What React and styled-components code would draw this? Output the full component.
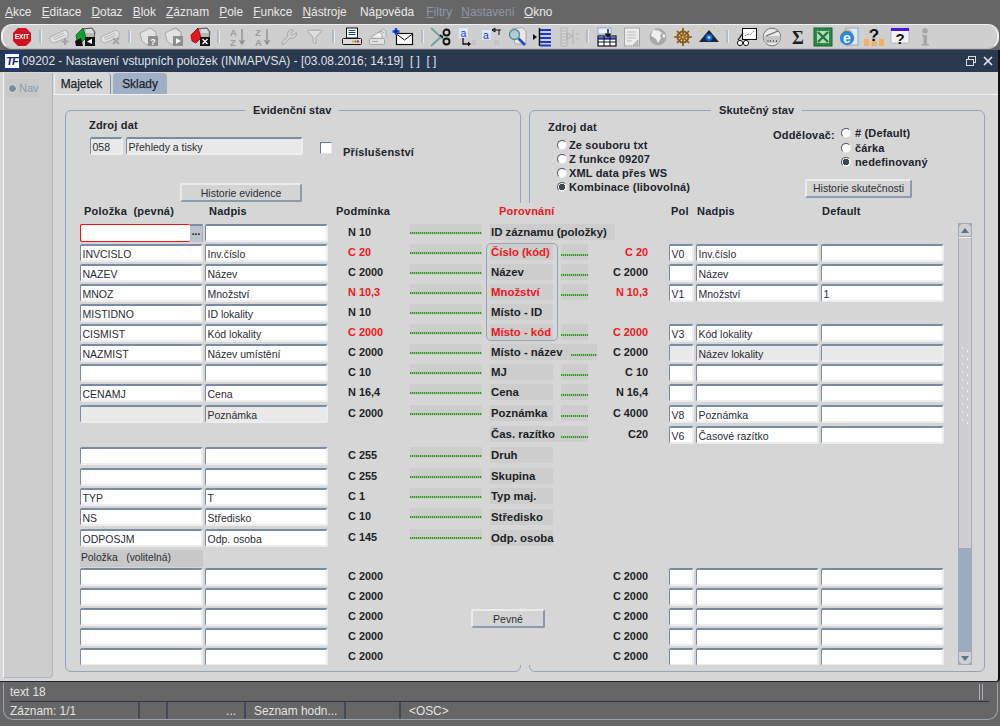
import React from "react";
import styled, { createGlobalStyle } from "styled-components";
import { Wrench, Filter } from "lucide-react";

const FONT = `"Liberation Sans", Arial, sans-serif`;
const GROUND = "#d6d6d6";
const SHADE = "#cdcdcd";
const EDGE = "#93a5bb";
const RED = "#f2161a";

const Global = createGlobalStyle`
  html, body { margin: 0; padding: 0; background: #666666; }
  body { font-family: ${FONT}; }
`;

const Page = styled.div`
  width: 1000px;
  height: 726px;
  display: flex;
  flex-direction: column;
  background: #666666;
  overflow: hidden;
`;

const MenuBar = styled.div`
  height: 24px;
  flex: none;
  display: flex;
  align-items: center;
  gap: 10.2px;
  padding-left: 5px;
  font-size: 11.9px;
`;
const MenuItem = styled.span`
  color: ${(p) => (p.$off ? "#8a97a8" : "#e9e9e9")};
  margin-left: ${(p) => p.$shift || 0}px;
  u { text-underline-offset: 1px; }
`;

const ToolBar = styled.div`
  height: 25px;
  flex: none;
  box-sizing: border-box;
  margin: 0 1px 1px;
  padding-left: 6px;
  display: flex;
  align-items: center;
  background: #cfcfcf;
  border: 1px solid #b9bcc2;
  border-top-color: #f0f0f0;
  border-left: 2px solid #efefef;
  border-right: 2px solid #efefef;
  border-radius: 11px;
`;
const Tool = styled.span`
  width: 25.5px;
  flex: none;
  display: flex;
  justify-content: center;
  align-items: center;
`;
const ToolSep = styled.span`
  width: 12.5px;
  height: 13px;
  flex: none;
  display: flex;
  justify-content: center;
  &::before {
    content: "";
    width: 2px;
    background: #aebccd;
    border-right: 1px solid #ececec;
  }
`;

const Window = styled.div`
  flex: none;
  height: 632px;
  display: flex;
  flex-direction: column;
  background: ${GROUND};
  border-right: 2px solid #111;
  border-bottom: 1px solid #23262e;
  border-bottom-right-radius: 4px;
  box-sizing: border-box;
  width: 1000px;
`;
const TitleBar = styled.div`
  height: 22px;
  flex: none;
  display: flex;
  align-items: center;
  gap: 2px;
  padding: 0 4px;
  background: #2a3850;
  color: #dfe3e8;
  font-size: 11.9px;
`;
const TitleLogo = styled.span`
  width: 16px;
  height: 16px;
  flex: none;
  box-sizing: border-box;
  display: flex;
  align-items: center;
  justify-content: center;
  background: #fff;
  border: 1px solid #1430d8;
  color: #10208a;
  font: italic bold 11px ${FONT};
  letter-spacing: -1px;
`;
const TitleText = styled.span`
  flex: 1;
  white-space: pre;
`;
const TitleActions = styled.span`
  display: flex;
  align-items: center;
  gap: 5px;
`;

const WindowBody = styled.div`
  flex: 1;
  min-height: 0;
  display: flex;
`;
const Side = styled.aside`
  width: 50px;
  flex: none;
  box-sizing: border-box;
  margin: 1px 0 3px 3px;
  padding: 6px 0 0 2px;
  background: ${SHADE};
  border-left: 1px solid #f4f4f4;
  border-right: 1px solid #aab6c6;
  border-bottom: 1px solid #aab6c6;
  border-bottom-right-radius: 4px;
`;
const NavButton = styled.div`
  width: 33px;
  height: 18px;
  display: flex;
  align-items: center;
  gap: 2px;
  padding-left: 2px;
  box-sizing: border-box;
  background: #c8c8c8;
  color: #8a9bb0;
  font-size: 11px;
`;
const NavDot = styled.span`
  width: 9px;
  height: 9px;
  flex: none;
  box-sizing: border-box;
  border-radius: 50%;
  background: #7f8a96;
  border: 1.5px solid #e2e2e2;
`;

const Main = styled.main`
  flex: 1;
  min-width: 0;
  display: flex;
  flex-direction: column;
`;
const TabStrip = styled.div`
  height: 23px;
  flex: none;
  box-sizing: border-box;
  padding: 1px 0 0 1px;
  display: flex;
  gap: 2px;
  border-bottom: 1px solid #f1f1f1;
`;
const Tab = styled.div`
  display: flex;
  align-items: center;
  justify-content: center;
  box-sizing: border-box;
  width: ${(p) => p.$w}px;
  color: #20242c;
  font-size: 11.9px;
  -webkit-text-stroke: 0.25px #20242c;
  border-top-left-radius: 4px;
  border-top-right-radius: 4px;
  background: ${(p) => (p.$on ? GROUND : "#9fb0c6")};
  border-left: 1px solid ${(p) => (p.$on ? "#f1f1f1" : "#9fb0c6")};
  border-right: 1px solid ${(p) => (p.$on ? "#7f90a8" : "#9fb0c6")};
  padding-right: ${(p) => (p.$on ? 2 : 0)}px;
`;

const Stack = styled.div`
  flex: 1;
  min-height: 0;
  display: grid;
  padding: 15px 0 0 12px;
  > * { grid-area: 1 / 1; }
`;
const Frames = styled.div`
  display: flex;
  gap: 8px;
  height: 562px;
`;
const Frame = styled.section`
  position: relative;
  box-sizing: border-box;
  width: 456px;
  height: 562px;
  flex: none;
  border: 1px solid ${EDGE};
  border-radius: 6px;
  &::after {
    content: "";
    position: absolute;
    top: 92px;
    bottom: 6px;
    width: 3px;
    background: ${GROUND};
    ${(p) => (p.$open === "right" ? "right: -2px;" : "left: -2px;")}
  }
`;
const Legend = styled.span`
  position: absolute;
  top: -8px;
  left: ${(p) => p.$x}px;
  padding: 0 8px;
  background: ${GROUND};
  color: #20242c;
  font-size: 11px;
  font-weight: 700;
  letter-spacing: 0.1px;
  line-height: 14px;
  white-space: nowrap;
`;

const LeftTop = styled.div`
  padding: 7px 0 0 23px;
`;
const Caption = styled.div`
  color: #20242c;
  font-size: 11px;
  font-weight: 700;
  letter-spacing: 0.2px;
  line-height: 14px;
  white-space: nowrap;
`;
const SourceLine = styled.div`
  display: flex;
  align-items: flex-start;
  gap: 3px;
  margin: 5px 0 0 1px;
`;
const Field = styled.div`
  box-sizing: border-box;
  height: 18px;
  width: ${(p) => (p.$w ? `${p.$w}px` : "100%")};
  flex: none;
  ${(p) => (p.$at ? `grid-column: ${p.$at}; grid-row: 1;` : "")}
  padding-left: 1.5px;
  overflow: hidden;
  white-space: nowrap;
  background: ${(p) => (p.$off ? "#e9e9e9" : "#fff")};
  border-style: solid;
  border-width: 2px 2px 2px 1.5px;
  border-color: #7a8ba5 #ededed #ededed #7a8ba5;
  border-radius: 2px;
  color: #2a2d33;
  font-size: 10.5px;
  line-height: 16px;
  ${(p) => (p.$hot ? `border: 1px solid ${RED}; border-right: none;` : "")}
`;
const CheckBox = styled.span`
  width: 12px;
  height: 12px;
  flex: none;
  box-sizing: border-box;
  margin: 5px 0 0 14px;
  background: #fff;
  border: 1px solid;
  border-color: #67788f #e8e8e8 #e8e8e8 #67788f;
`;
const CheckLabel = styled(Caption)`
  margin: 8px 0 0 8px;
`;
const Push = styled.div`
  box-sizing: border-box;
  width: ${(p) => p.$w}px;
  height: 19px;
  display: flex;
  align-items: center;
  justify-content: center;
  background: #d4d4d4;
  border: 2px solid;
  border-color: #ebebeb #8a9ab0 #8a9ab0 #ebebeb;
  border-radius: 2px;
  color: #2a2d33;
  font-size: 10.5px;
  white-space: nowrap;
`;
const EvidenceButton = styled(Push)`
  margin: 24px 0 0 91px;
`;

const RightTop = styled.div`
  display: flex;
`;
const SourceColumn = styled.div`
  width: 225px;
  flex: none;
  padding: 9px 0 0 18px;
`;
const RadioStack = styled.div`
  display: flex;
  flex-direction: column;
  margin: ${(p) => p.$m};
`;
const RadioRow = styled.div`
  height: ${(p) => p.$h}px;
  display: flex;
  align-items: center;
  gap: ${(p) => p.$gap}px;
  color: #20242c;
  font-size: 11px;
  font-weight: 700;
  letter-spacing: 0.15px;
  white-space: nowrap;
`;
const RadioDot = styled.span`
  width: 10px;
  height: 10px;
  flex: none;
  box-sizing: border-box;
  border-radius: 50%;
  border: 1px solid;
  border-color: #4e5866 #e8e8e8 #e8e8e8 #4e5866;
  background: ${(p) => (p.$on ? "radial-gradient(circle, #3c4552 0 3px, #f5f5f5 3.5px)" : "#fff")};
`;
const SeparatorColumn = styled.div`
  flex: 1;
  padding: 15px 0 0 0;
`;
const SeparatorLine = styled.div`
  display: flex;
  align-items: flex-start;
`;
const SeparatorLabel = styled(Caption)`
  width: 68px;
  padding-top: 2px;
`;
const ActualButton = styled(Push)`
  margin: 9px 0 0 32px;
`;

const Form = styled.div`
  position: relative;
  height: 555px;
  padding: 94px 0 0 15px;
  box-sizing: border-box;
  display: flex;
  overflow: hidden;
`;
const Rows = styled.div`
  width: 864px;
  flex: none;
`;
const Row = styled.div`
  height: ${(p) => p.$h}px;
  display: grid;
  align-items: start;
  grid-template-columns:
    [a] 123px 2px [b] 123px [c] 82px [d] 72px 8px [l] 63px 8px [e] 27px [f] 60px 21px
    [p] 25px 2px [n] 123px 2px [x] 123px [end];
  overflow: hidden;
`;
const Head = styled.div`
  grid-column: ${(p) => p.$at};
  grid-row: 1;
  white-space: nowrap;
  padding-left: ${(p) => p.$pad}px;
  color: ${(p) => (p.$red ? RED : "#20242c")};
  font-size: 11px;
  font-weight: 700;
  letter-spacing: 0.2px;
  line-height: 14px;
`;
const LookupSlot = styled.div`
  grid-column: a;
  grid-row: 1;
  display: flex;
`;
const LookupButton = styled.span`
  width: 13px;
  height: 18px;
  flex: none;
  box-sizing: border-box;
  background: #bdc3cc;
  border-top: 2px solid #7a8ba5;
  border-right: 1px solid #aab;
  color: #111;
  font-size: 10px;
  font-weight: 700;
  line-height: 11px;
  text-align: center;
`;
const Cond = styled.div`
  grid-column: ${(p) => (p.$right ? "f" : "c")};
  grid-row: 1;
  box-sizing: border-box;
  padding-left: ${(p) => (p.$right ? 0 : 20)}px;
  text-align: ${(p) => (p.$right ? "right" : "left")};
  color: ${(p) => (p.$red ? RED : "#1c1f25")};
  font-size: 10.9px;
  font-weight: 700;
  line-height: 17px;
  white-space: nowrap;
`;
const DOTS = `repeating-linear-gradient(90deg, #2f9a22 0 1px, #9ac08f 1px 2px)`;
const LongDots = styled.div`
  grid-column: d;
  grid-row: 1;
  height: 11px;
  background: ${DOTS} 0 8px / 100% 2px no-repeat, ${SHADE};
`;
const ShortDots = styled.div`
  grid-column: e;
  grid-row: 1;
  height: 16px;
  background: ${DOTS} 0 10px / 100% 2px no-repeat, ${SHADE};
`;
const Tag = styled.div`
  grid-column: l;
  grid-row: 1;
  box-sizing: border-box;
  width: ${(p) => p.$w || 63}px;
  height: 16px;
  margin-top: ${(p) => p.$dy || 0}px;
  padding-left: 1px;
  display: flex;
  background: ${SHADE};
  color: ${(p) => (p.$red ? RED : "#1c1f25")};
  font-size: 11.4px;
  font-weight: 700;
  line-height: 17px;
  white-space: nowrap;
  z-index: 1;
`;
const InlineDots = styled.span`
  flex: 1;
  height: 16px;
  margin-left: 8px;
  background: ${DOTS} 0 10px / 100% 2px no-repeat;
`;
const OptionalHead = styled.div`
  grid-column: a;
  grid-row: 1;
  height: 17px;
  background: #c8c8c8;
  color: #2a2d33;
  font-size: 10.3px;
  line-height: 15px;
  padding-left: 1px;
  white-space: pre;
`;
const FixedButton = styled(Push)`
  grid-column: d / e;
  grid-row: 1;
  margin-left: 61px;
  margin-top: 1px;
`;
const Group = styled.div`
  position: absolute;
  left: 421px;
  top: 133px;
  width: 72px;
  height: 98px;
  box-sizing: border-box;
  border: 1px solid #8fa3bc;
  border-radius: 5px;
  pointer-events: none;
`;
const Scroll = styled.div`
  width: 14px;
  height: 442px;
  flex: none;
  margin: 19px 0 0 14px;
  display: flex;
  flex-direction: column;
  box-sizing: border-box;
  background: #9cabc0;
`;
const ScrollEnd = styled.div`
  height: 14px;
  flex: none;
  box-sizing: border-box;
  display: flex;
  align-items: center;
  justify-content: center;
  background: #d0d0d0;
  border: 1px solid #9cabc0;
  border-radius: ${(p) => (p.$up ? "5px 5px 0 0" : "0 0 5px 5px")};
  &::before {
    content: "";
    border-left: 4px solid transparent;
    border-right: 4px solid transparent;
    ${(p) => (p.$up ? "border-bottom: 5px solid #5f7290;" : "border-top: 5px solid #5f7290;")}
  }
`;
const Thumb = styled.div`
  height: 311px;
  flex: none;
  box-sizing: border-box;
  position: relative;
  background: #cfcfcf;
  border-left: 1px solid #9cabc0;
  border-right: 1px solid #9cabc0;
  border-top: 1px solid #f0f0f0;
  &::after {
    content: "";
    position: absolute;
    left: 1px;
    right: 1px;
    top: 106px;
    height: 82px;
    background:
      radial-gradient(circle, #f2f2f2 0 0.8px, transparent 1px) 0 0 / 5px 8px,
      radial-gradient(circle, #f2f2f2 0 0.8px, transparent 1px) 5px 3px / 5px 8px;
    background-repeat: repeat-y;
  }
`;
const ScrollFill = styled.div`
  flex: 1;
`;

const Status = styled.footer`
  flex: 1;
  min-height: 0;
  box-sizing: border-box;
  margin: 1px 2px 6px 3px;
  padding-left: 6px;
  padding-right: 8px;
  display: flex;
  flex-direction: column;
  border: 1px solid #9aa3ae;
  border-top: none;
  border-radius: 0 0 10px 10px;
  color: #e4e4e4;
  font-size: 11.9px;
`;
const HintRow = styled.div`
  height: 19px;
  flex: none;
  box-sizing: border-box;
  display: flex;
  align-items: center;
  justify-content: space-between;
  border-bottom: 1px solid #2e333d;
  padding-right: 6px;
  &::after {
    content: "";
    width: 2px;
    height: 16px;
    border-left: 1px solid #a9b2bd;
    border-right: 1px solid #a9b2bd;
  }
`;
const InfoRow = styled.div`
  flex: 1;
  display: flex;
  align-items: stretch;
  white-space: nowrap;
`;
const InfoCell = styled.div`
  width: ${(p) => p.$w}px;
  flex: none;
  box-sizing: border-box;
  padding: 0 ${(p) => p.$r || 0}px 0 ${(p) => p.$l || 0}px;
  display: flex;
  align-items: center;
  justify-content: ${(p) => (p.$end ? "flex-end" : "flex-start")};
  border-right: ${(p) => (p.$last ? "none" : "2px solid #434a57")};
`;

/* ---------- toolbar drawings ---------- */
const Svg = ({ children, w = 22, h = 20 }) => (
  <svg width={w} height={h} viewBox="0 0 22 20" fill="none">{children}</svg>
);
const G1 = "#a3a3a3";
const G2 = "#e2e2e2";

const ghostCard = (
  <>
    <polygon points="1,10 16,3 19,5 19,10 5,16 1,14" fill={G2} stroke={G1} strokeWidth="0.8" />
    <path d="M4 11l11-5M5 13l11-5" stroke={G1} strokeWidth="0.7" />
  </>
);
const colourCard = (fill, dark) => (
  <>
    <polygon points="8,2 18,1 21,5 20,11 9,12" fill="#b9b9b9" stroke="#333" strokeWidth="0.8" />
    <path d="M12 3h6M12 5h7" stroke="#fff" strokeWidth="0.9" />
    <polygon points="2,8 9,1 12,11 7,16 3,14" fill={fill} stroke={dark} strokeWidth="0.8" />
  </>
);
const docGhost = (
  <polygon points="2,6 12,1 18,5 18,12 9,18 4,14" fill={G2} stroke={G1} strokeWidth="0.9" />
);

const drawings = {
  exit: (
    <svg width="20" height="20" viewBox="0 0 20 20">
      <polygon points="6,1 14,1 19,6 19,14 14,19 6,19 1,14 1,6" fill="#d5101e" />
      <text x="10" y="12.4" textAnchor="middle" fontFamily={FONT} fontWeight="700" fontSize="6.6" fill="#fff">EXIT</text>
    </svg>
  ),
  addRow: (
    <Svg>
      {ghostCard}
      <path d="M16 11v7M12.5 14.5h7" stroke={G1} strokeWidth="2" />
    </Svg>
  ),
  green: (
    <Svg>
      {colourCard("#14a02c", "#0a5a18")}
      <polygon points="1,14 7,11 9,19 2,19" fill="#111" />
      <rect x="11" y="10" width="10" height="9" fill="#111" />
      <polygon points="13,14.5 18,11.8 18,17" fill="#fff" />
    </Svg>
  ),
  delRow: (
    <Svg>
      {ghostCard}
      <path d="M13 11l6 6M19 11l-6 6" stroke={G1} strokeWidth="1.8" />
    </Svg>
  ),
  askDoc: (
    <Svg>
      {docGhost}
      <rect x="10" y="9" width="10" height="10" fill="#8e8e8e" />
      <text x="15" y="17.6" textAnchor="middle" fontFamily={FONT} fontWeight="700" fontSize="9" fill="#fff">?</text>
    </Svg>
  ),
  playDoc: (
    <Svg>
      {docGhost}
      <path d="M8 3l5-2 4 3" stroke={G1} />
      <rect x="10" y="9" width="10" height="10" fill="#8e8e8e" />
      <polygon points="13,11 18,14 13,17" fill="#fff" />
    </Svg>
  ),
  red: (
    <Svg>
      {colourCard("#e3161c", "#7e0a0e")}
      <rect x="11" y="10" width="10" height="9" fill="#111" />
      <path d="M13.5 12l5 5M18.5 12l-5 5" stroke="#fff" strokeWidth="1.4" />
    </Svg>
  ),
  az: (
    <Svg>
      <text x="3" y="9" fontFamily={FONT} fontWeight="700" fontSize="9.5" fill="#9c9c9c">A</text>
      <text x="3" y="18.5" fontFamily={FONT} fontWeight="700" fontSize="9.5" fill="#9c9c9c">Z</text>
      <path d="M15 2v14M12.5 13l2.5 4 2.5-4" stroke="#8d8d8d" strokeWidth="1.3" />
    </Svg>
  ),
  za: (
    <Svg>
      <text x="3" y="9" fontFamily={FONT} fontWeight="700" fontSize="9.5" fill="#9c9c9c">Z</text>
      <text x="3" y="18.5" fontFamily={FONT} fontWeight="700" fontSize="9.5" fill="#9c9c9c">A</text>
      <path d="M15 2v14M12.5 13l2.5 4 2.5-4" stroke="#8d8d8d" strokeWidth="1.3" />
    </Svg>
  ),
  wrench: <Wrench size={18} color="#a6a6a6" strokeWidth={1.3} />,
  filter: <Filter size={17} color="#a6a6a6" fill="#dedede" strokeWidth={1.4} />,
  printer: (
    <Svg>
      <rect x="5.5" y="1" width="11" height="10" fill="#fff" stroke="#111" />
      <path d="M7.5 3.5h7M7.5 5.5h7M7.5 7.5h7" stroke="#1d3ea8" />
      <rect x="1.5" y="11.5" width="19" height="6" rx="1" fill="#dcdcdc" stroke="#111" />
      <rect x="11" y="13.5" width="2" height="2" fill="#d8b020" />
      <rect x="13.5" y="13.5" width="2" height="2" fill="#28a040" />
      <rect x="16" y="13.5" width="2" height="2" fill="#d82020" />
    </Svg>
  ),
  printers: (
    <Svg>
      <path d="M8 8l8-6 3 2v6M6 9l8-5 3 2" stroke={G1} fill={G2} strokeWidth="0.9" />
      <path d="M4 10l8-5 3 2v4" stroke={G1} fill="#f0f0f0" strokeWidth="0.9" />
      <rect x="2.5" y="11.5" width="15" height="6" rx="1" fill={G2} stroke={G1} />
      <path d="M5 14.5h6" stroke={G1} />
    </Svg>
  ),
  mail: (
    <Svg>
      <rect x="4.5" y="6.5" width="16" height="11" fill="#fff" stroke="#111" strokeWidth="1.2" />
      <path d="M4.5 7l8 6 8-6" stroke="#111" />
      <path d="M4 1v7M.5 4.5h7" stroke="#0a5cf0" strokeWidth="2.4" />
      <circle cx="4" cy="4.5" r="2" fill="#0a2fa8" />
    </Svg>
  ),
  scissors: (
    <Svg>
      <path d="M1 1l12 11M1 19l12-11" stroke="#6fa0a2" strokeWidth="1.8" />
      <path d="M10 8l3 2.5" stroke="#111" strokeWidth="1.6" />
      <circle cx="16.5" cy="5.5" r="3" stroke="#111" strokeWidth="1.8" />
      <circle cx="16.5" cy="14.5" r="3" stroke="#111" strokeWidth="1.8" />
    </Svg>
  ),
  aDown: (
    <Svg>
      <rect x="3" y="1" width="9" height="10" fill="#dfe6ff" />
      <text x="4.5" y="9.5" fontFamily={FONT} fontSize="10.5" fill="#1a3cd8">a</text>
      <path d="M7 11v6h6" stroke="#111" strokeWidth="1.3" />
      <path d="M12 14.5l3 2.5-3 2.5z" fill="#111" />
      <text x="15" y="18" fontFamily={FONT} fontSize="9.5" fill="#bcbcbc">a</text>
    </Svg>
  ),
  aLeft: (
    <Svg>
      <rect x="1" y="3" width="9" height="10" fill="#dfe6ff" />
      <text x="2" y="12" fontFamily={FONT} fontSize="10.5" fill="#1a3cd8">a</text>
      <path d="M11 3h9M11 3l3-2v4z" stroke="#111" />
      <path d="M18 3v5" stroke="#111" />
      <text x="13" y="18" fontFamily={FONT} fontSize="9.5" fill="#bcbcbc">a</text>
    </Svg>
  ),
  magnify: (
    <Svg>
      <polygon points="5,2 15,0.5 19,4 19,17 8,17" fill="#e8e8e8" stroke="#a8a8a8" />
      <circle cx="7.5" cy="7.5" r="5" fill="#a8cfd8" stroke="#5e8a96" strokeWidth="1.3" />
      <path d="M11.5 11.5l6.5 6.5" stroke="#1f4fc0" strokeWidth="2.6" />
    </Svg>
  ),
  lines: (
    <Svg>
      <polygon points="1,7 5,10 1,13" fill="#111" />
      <path d="M7.5 1v18" stroke="#111" strokeWidth="1.5" />
      <path d="M8 3h11M8 7h11M8 11h11M8 15h11M8 18.5h11" stroke="#1c37d8" strokeWidth="1.9" />
    </Svg>
  ),
  linesOff: (
    <Svg>
      <path d="M3 1h6v18H3zM3 4h6M3 7h6M3 10h6M3 13h6M3 16h6" stroke="#b4b4b4" fill="#d6d6d6" />
      <path d="M9 6l5 3-5 3zM15 3v14M18 7h3M18 12h3" stroke="#b4b4b4" strokeWidth="1.2" />
    </Svg>
  ),
  table: (
    <Svg>
      <rect x="2" y="1" width="13" height="6" fill="#eef2ff" stroke="#7f9ad8" strokeWidth="0.8" />
      <rect x="2" y="9" width="18" height="10" fill="#fff" stroke="#111" strokeWidth="1.2" />
      <path d="M2 11.5h18" stroke="#1a34a0" strokeWidth="2.4" />
      <path d="M8 9v10M14 9v10M2 15h18" stroke="#111" />
      <path d="M12 2v7M9.5 6.5l2.5 3 2.5-3" stroke="#111" strokeWidth="1.4" />
    </Svg>
  ),
  page: (
    <Svg>
      <rect x="3.5" y="1" width="15" height="18" fill="#ececec" stroke="#a5a5a5" />
      <path d="M6 5h9M6 8h9M6 11h9M6 14h5" stroke="#bdbdbd" />
      <path d="M12 18l5-5v5z" fill="#c4c4c4" stroke="#9b9b9b" strokeWidth="0.6" />
    </Svg>
  ),
  globe: (
    <Svg>
      <circle cx="11" cy="10" r="8.5" fill="#a9a9a9" />
      <path d="M6 3l6 .5 3 2.5-2 3 1 2-3 5-2-4-3-2-2-1.5z" fill="#efefef" />
      <path d="M16 7l2.5 1-1 3-2-1z" fill="#efefef" />
    </Svg>
  ),
  wheel: (
    <Svg>
      <circle cx="11" cy="10" r="5.5" stroke="#8a5a14" strokeWidth="2" />
      <path d="M11 1v18M2 10h18M5 4l12 12M17 4L5 16" stroke="#8a5a14" strokeWidth="1.7" />
      <circle cx="11" cy="10" r="1.6" fill="#d6a040" />
    </Svg>
  ),
  pyramid: (
    <Svg>
      <path d="M3 5L1 3M6 2.5L5 1M16 2.5L17 1M19 5l2-2" stroke="#d8c820" strokeWidth="1" />
      <polygon points="11,3 21,15 1,15" fill="#1c2530" />
      <circle cx="11" cy="10.5" r="3.5" fill="#1060f0" />
      <circle cx="11" cy="10.5" r="1.4" fill="#9fe0ff" />
    </Svg>
  ),
  cart: (
    <Svg>
      <rect x="6.5" y="1.5" width="14" height="11" fill="#fff" stroke="#111" />
      <path d="M9 9l3-2 2 1 4-4" stroke="#555" strokeDasharray="1 1" />
      <path d="M2 13l5-7" stroke="#111" strokeWidth="1.2" />
      <circle cx="4" cy="16" r="2.6" fill="#fff" stroke="#111" />
      <circle cx="10" cy="16" r="2.6" fill="#fff" stroke="#111" />
    </Svg>
  ),
  gauge: (
    <Svg>
      <circle cx="11" cy="10" r="8.8" fill="#e9e9e9" stroke="#777" />
      <path d="M2.5 9h17v2.6l-1.7 4.4H4.2l-1.7-4.4z" fill="#c4c4c4" />
      <path d="M5 9l12-5" stroke="#666" strokeWidth="1.2" />
      <path d="M6.5 14h1M9 14h1M12 14h1M15 14h1" stroke="#444" strokeWidth="1.6" />
    </Svg>
  ),
  sigma: (
    <Svg>
      <text x="11" y="16.5" textAnchor="middle" fontFamily={`"Liberation Serif", serif`} fontWeight="700" fontSize="18" fill="#1c1f25">Σ</text>
    </Svg>
  ),
  excel: (
    <Svg>
      <rect x="2" y="1" width="18" height="18" fill="#2a8a48" stroke="#1c5c30" />
      <rect x="5" y="4" width="12" height="12" fill="#b8dabc" />
      <path d="M6 5l10 10M16 5L6 15" stroke="#1f7a3a" strokeWidth="2.4" />
    </Svg>
  ),
  ie: (
    <Svg>
      <rect x="8" y="1" width="12" height="17" fill="#dfe8f4" stroke="#8fa6c4" />
      <circle cx="9" cy="11" r="7.2" fill="#2f86d8" />
      <text x="9" y="16" textAnchor="middle" fontFamily={FONT} fontWeight="700" fontSize="14" fill="#e8f4ff">e</text>
      <path d="M3 7c3-5 9-5 11-2" stroke="#e8a030" strokeWidth="1" />
    </Svg>
  ),
  helpBars: (
    <Svg>
      <text x="11" y="14" textAnchor="middle" fontFamily={FONT} fontWeight="700" fontSize="17" fill="#111">?</text>
      <rect x="1" y="12" width="5" height="7" fill="#f0b060" />
      <rect x="8.5" y="14" width="5" height="5" fill="#f0b060" />
      <rect x="16" y="12" width="5" height="7" fill="#f0b060" />
    </Svg>
  ),
  helpBox: (
    <Svg>
      <rect x="2" y="2" width="18" height="14" fill="#f2f2f2" stroke="#aaa" strokeWidth="0.7" />
      <rect x="2" y="1" width="18" height="3" fill="#4818d8" />
      <text x="11" y="17" textAnchor="middle" fontFamily={FONT} fontWeight="700" fontSize="15" fill="#111">?</text>
    </Svg>
  ),
  info: (
    <Svg>
      <circle cx="11" cy="4" r="2.8" fill="#a6a6a6" />
      <path d="M8 8h5v9h2v1.6H7.5V17h2v-7.4H8z" fill="#a6a6a6" />
    </Svg>
  ),
};

const toolset = [
  "exit", "|", "addRow", "green", "delRow", "|", "askDoc", "playDoc", "red", "|",
  "az", "za", "wrench", "filter", "|", "printer", "printers", "mail", "|",
  "scissors", "aDown", "aLeft", "magnify", "lines", "linesOff", "|",
  "table", "page", "globe", "wheel", "pyramid", "|",
  "cart", "gauge", "sigma", "excel", "ie", "helpBars", "helpBox", "info",
];

const menus = [
  { pre: "", key: "A", rest: "kce" },
  { pre: "", key: "E", rest: "ditace" },
  { pre: "", key: "D", rest: "otaz" },
  { pre: "", key: "B", rest: "lok" },
  { pre: "", key: "Z", rest: "áznam" },
  { pre: "", key: "P", rest: "ole" },
  { pre: "", key: "F", rest: "unkce" },
  { pre: "", key: "N", rest: "ástroje" },
  { pre: "Ná", key: "p", rest: "ověda", shift: 3 },
  { pre: "", key: "F", rest: "iltry", off: true, shift: 2 },
  { pre: "", key: "N", rest: "astavení", off: true, shift: -1 },
  { pre: "", key: "O", rest: "kno", shift: -1 },
];

/* ---------- rows of the form ---------- */
const H = [20, 20, 20, 20, 20, 20, 20, 20, 21, 21, 21, 21, 20, 20, 21, 21];
const data = [
  { a: "", b: "", c: "N 10", tag: "ID záznamu (položky)", w: 125, hot: true },
  { a: "INVCISLO", b: "Inv.číslo", c: "C 20", red: true, tag: "Číslo (kód)", c2: "C 20", pol: "V0", n: "Inv.číslo", d: "" },
  { a: "NAZEV", b: "Název", c: "C 2000", tag: "Název", c2: "C 2000", pol: "", n: "Název", d: "" },
  { a: "MNOZ", b: "Množství", c: "N 10,3", red: true, tag: "Množství", c2: "N 10,3", pol: "V1", n: "Množství", d: "1" },
  { a: "MISTIDNO", b: "ID lokality", c: "N 10", tag: "Místo - ID" },
  { a: "CISMIST", b: "Kód lokality", c: "C 2000", red: true, tag: "Místo - kód", c2: "C 2000", pol: "V3", n: "Kód lokality", d: "" },
  { a: "NAZMIST", b: "Název umístění", c: "C 2000", tag: "Místo - název", w: 107, inline: true, c2: "C 2000", pol: "", n: "Název lokality", d: "", rightOff: true },
  { a: "", b: "", c: "C 10", tag: "MJ", c2: "C 10", pol: "", n: "", d: "" },
  { a: "CENAMJ", b: "Cena", c: "N 16,4", tag: "Cena", c2: "N 16,4", pol: "", n: "", d: "" },
  { a: "", aOff: true, b: "Poznámka", bOff: true, c: "C 2000", tag: "Poznámka", c2: "C 4000", pol: "V8", n: "Poznámka", d: "" },
  { noLeft: true, tag: "Čas. razítko", w: 71, c2: "C20", pol: "V6", n: "Časové razítko", d: "" },
  { a: "", b: "", c: "C 255", tag: "Druh" },
  { a: "", b: "", c: "C 255", tag: "Skupina" },
  { a: "TYP", b: "T", c: "C 1", tag: "Typ maj." },
  { a: "NS", b: "Středisko", c: "C 10", tag: "Středisko", dy: 1 },
  { a: "ODPOSJM", b: "Odp. osoba", c: "C 145", tag: "Odp. osoba", dy: 1 },
];

const RightCells = ({ row }) =>
  row.c2 ? (
    <>
      <Cond $right $red={row.red}>{row.c2}</Cond>
      <Field $at="p" $off={row.rightOff}>{row.pol}</Field>
      <Field $at="n" $off={row.rightOff}>{row.n}</Field>
      <Field $at="x" $off={row.rightOff}>{row.d}</Field>
    </>
  ) : null;

const FormRow = ({ row, h }) => (
  <Row $h={h}>
    {row.hot ? (
      <LookupSlot>
        <Field $w={110} $hot />
        <LookupButton>...</LookupButton>
      </LookupSlot>
    ) : null}
    {!row.hot && !row.noLeft ? <Field $at="a" $off={row.aOff}>{row.a}</Field> : null}
    {!row.noLeft ? <Field $at="b" $off={row.bOff}>{row.b}</Field> : null}
    {row.c ? <Cond $red={row.red}>{row.c}</Cond> : null}
    {!row.noLeft ? <LongDots /> : null}
    <Tag $red={row.red} $w={row.w} $dy={row.dy}>
      {row.tag}
      {row.inline ? <InlineDots /> : null}
    </Tag>
    {row.c2 && !row.inline ? <ShortDots /> : null}
    <RightCells row={row} />
  </Row>
);

const OptionalRow = ({ h, withButton }) => (
  <Row $h={h}>
    <Field $at="a" />
    <Field $at="b" />
    <Cond>C 2000</Cond>
    {withButton ? <FixedButton $w={74}>Pevné</FixedButton> : null}
    <Cond $right>C 2000</Cond>
    <Field $at="p" />
    <Field $at="n" />
    <Field $at="x" />
  </Row>
);

export default function App() {
  return (
    <Page>
      <Global />
      <MenuBar>
        {menus.map((m) => (
          <MenuItem key={m.pre + m.key + m.rest} $off={m.off} $shift={m.shift}>
            {m.pre}<u>{m.key}</u>{m.rest}
          </MenuItem>
        ))}
      </MenuBar>

      <ToolBar>
        {toolset.map((name, i) =>
          name === "|" ? <ToolSep key={i} /> : <Tool key={i}>{drawings[name]}</Tool>
        )}
      </ToolBar>

      <Window>
        <TitleBar>
          <TitleLogo>TF</TitleLogo>
          <TitleText>09202 - Nastavení vstupních položek (INMAPVSA) - [03.08.2016; 14:19]  [ ]  [ ]</TitleText>
          <TitleActions>
            <svg width="12" height="12" viewBox="0 0 12 12" fill="none" stroke="#d8dde4">
              <rect x="3.5" y="1.5" width="7" height="6" />
              <rect x="1.5" y="4.5" width="7" height="6" fill="#2a3850" />
            </svg>
            <svg width="12" height="12" viewBox="0 0 12 12" fill="none" stroke="#e4e7ec" strokeWidth="1.7">
              <path d="M2 2l8 8M10 2l-8 8" />
            </svg>
          </TitleActions>
        </TitleBar>

        <WindowBody>
          <Side>
            <NavButton><NavDot />Nav</NavButton>
          </Side>
          <Main>
            <TabStrip>
              <Tab $on $w={57}>Majetek</Tab>
              <Tab $w={54}>Sklady</Tab>
            </TabStrip>
            <Stack>
              <Frames>
                <Frame $open="right">
                  <Legend $x={179}>Evidenční stav</Legend>
                  <LeftTop>
                    <Caption>Zdroj dat</Caption>
                    <SourceLine>
                      <Field $w={33} $off>058</Field>
                      <Field $w={177} $off>Přehledy a tisky</Field>
                      <CheckBox />
                      <CheckLabel>Příslušenství</CheckLabel>
                    </SourceLine>
                    <EvidenceButton $w={122}>Historie evidence</EvidenceButton>
                  </LeftTop>
                </Frame>
                <Frame $open="left">
                  <Legend $x={181}>Skutečný stav</Legend>
                  <RightTop>
                    <SourceColumn>
                      <Caption>Zdroj dat</Caption>
                      <RadioStack $m="4px 0 0 9px">
                        {["Ze souboru txt", "Z funkce 09207", "XML data přes WS", "Kombinace (libovolná)"].map((t, i) => (
                          <RadioRow key={t} $h={14} $gap={2}>
                            <RadioDot $on={i === 3} />
                            {t}
                          </RadioRow>
                        ))}
                      </RadioStack>
                    </SourceColumn>
                    <SeparatorColumn>
                      <SeparatorLine>
                        <SeparatorLabel>Oddělovač:</SeparatorLabel>
                        <RadioStack $m="0">
                          {["# (Default)", "čárka", "nedefinovaný"].map((t, i) => (
                            <RadioRow key={t} $h={14.6} $gap={4}>
                              <RadioDot $on={i === 2} />
                              {t}
                            </RadioRow>
                          ))}
                        </RadioStack>
                      </SeparatorLine>
                      <ActualButton $w={107}>Historie skutečnosti</ActualButton>
                    </SeparatorColumn>
                  </RightTop>
                </Frame>
              </Frames>

              <Form>
                <Rows>
                  <Row $h={20}>
                    <Head $at="a" $pad={4}>Položka&nbsp; (pevná)</Head>
                    <Head $at="b" $pad={4}>Nadpis</Head>
                    <Head $at="c" $pad={8}>Podmínka</Head>
                    <Head $at="l" $pad={9} $red>Porovnání</Head>
                    <Head $at="p" $pad={2}>Pol</Head>
                    <Head $at="n" $pad={1}>Nadpis</Head>
                    <Head $at="x" $pad={1}>Default</Head>
                  </Row>
                  {data.map((row, i) => (
                    <FormRow key={i} row={row} h={H[i]} />
                  ))}
                  <Row $h={18}>
                    <OptionalHead>Položka   (volitelná)</OptionalHead>
                  </Row>
                  <OptionalRow h={20} />
                  <OptionalRow h={20} />
                  <OptionalRow h={20} withButton />
                  <OptionalRow h={20} />
                  <OptionalRow h={17} />
                </Rows>
                <Scroll>
                  <ScrollEnd $up />
                  <Thumb />
                  <ScrollFill />
                  <ScrollEnd />
                </Scroll>
                <Group />
              </Form>
            </Stack>
          </Main>
        </WindowBody>
      </Window>

      <Status>
        <HintRow>text 18</HintRow>
        <InfoRow>
          <InfoCell $w={130}>Záznam: 1/1</InfoCell>
          <InfoCell $w={28} />
          <InfoCell $w={78} $end $r={8}>...</InfoCell>
          <InfoCell $w={100} $l={8}>Seznam hodn...</InfoCell>
          <InfoCell $w={55} />
          <InfoCell $w={200} $l={8} $last>&lt;OSC&gt;</InfoCell>
        </InfoRow>
      </Status>
    </Page>
  );
}
